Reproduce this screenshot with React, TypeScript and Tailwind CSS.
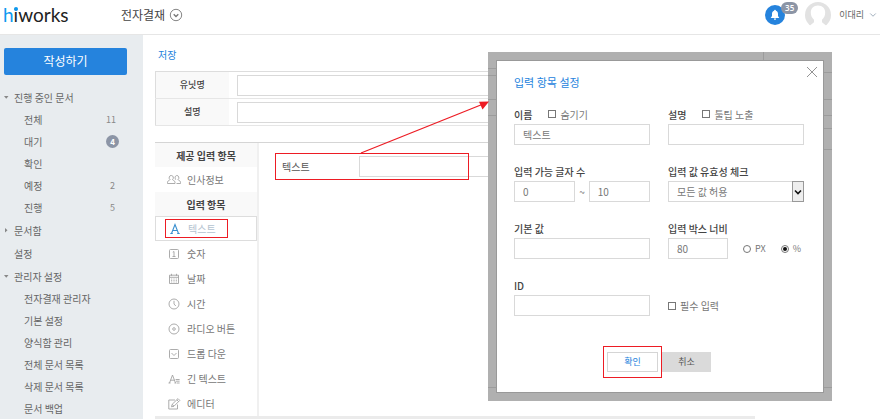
import type { ReactNode } from "react";
import { ChevronDown } from "lucide-react";

const menuGroups = [
  {
    title: "진행 중인 문서",
    arrow: "down",
    items: [
      { label: "전체", count: 11 },
      { label: "대기", count: 4, badge: true },
      { label: "확인" },
      { label: "예정", count: 2 },
      { label: "진행", count: 5 },
    ],
  },
  { title: "문서함", arrow: "right", items: [] },
  { title: "설정", arrow: "", items: [] },
  {
    title: "관리자 설정",
    arrow: "down",
    items: [
      { label: "전자결재 관리자" },
      { label: "기본 설정" },
      { label: "양식함 관리" },
      { label: "전체 문서 목록" },
      { label: "삭제 문서 목록" },
      { label: "문서 백업" },
    ],
  },
];

const Icon = ({ children }: { children: ReactNode }) => (
  <svg
    viewBox="0 0 14 14"
    className="size-3.5 shrink-0"
    fill="none"
    stroke="#a3a3a3"
    strokeWidth="0.9"
    aria-hidden="true"
  >
    {children}
  </svg>
);

const fieldTypes = [
  {
    label: "숫자",
    icon: (
      <Icon>
        <rect x="2.5" y="2.5" width="9" height="9" rx="1" />
        <path d="M5.8 5.2 7 4.5V9.5M5.5 9.5h3" />
      </Icon>
    ),
  },
  {
    label: "날짜",
    icon: (
      <Icon>
        <path d="M2.5 3.2h9v8.3h-9zM2.5 5.3h9M4.5 1.8v2M9.5 1.8v2" />
        <path d="M4.2 7h1M6.5 7h1M8.8 7h1M4.2 8.5h1M6.5 8.5h1M8.8 8.5h1M4.2 10h1M6.5 10h1M8.8 10h1" />
      </Icon>
    ),
  },
  {
    label: "시간",
    icon: (
      <Icon>
        <circle cx="7" cy="7" r="5" />
        <path d="M7 3.8V7l1.8 2" />
      </Icon>
    ),
  },
  {
    label: "라디오 버튼",
    icon: (
      <Icon>
        <circle cx="7" cy="7" r="5" />
        <circle cx="7" cy="7" r="1.3" />
      </Icon>
    ),
  },
  {
    label: "드롭 다운",
    icon: (
      <Icon>
        <rect x="2.5" y="2.5" width="9" height="9" rx="1" />
        <path d="m4.5 6 2.5 2.5L9.5 6" />
      </Icon>
    ),
  },
  {
    label: "긴 텍스트",
    icon: (
      <Icon>
        <path d="M2.5 11 5.5 3 8.5 11M3.5 8.2h4M1.5 11h2M7.5 11h1.5M8.6 7.5h4M9 9.2h3.6M9.6 11h3" />
      </Icon>
    ),
  },
  {
    label: "에디터",
    icon: (
      <Icon>
        <path d="M8 3H1.8v9h8.7V7.5" />
        <path d="m4.5 9.8.6-2.4L11 1.6l1.8 1.8L7 9.2zM9.8 2.8l1.8 1.8M5.1 7.4 7 9.2" />
      </Icon>
    ),
  },
];

const inputStyle =
  "h-[21px] min-w-0 w-full border border-[#d9d9d9] bg-white px-2 text-[10px] text-[#777] outline-none";
const checkStyle = "size-2 appearance-none border border-[#777] bg-white";

const Header = () => (
  <header className="flex h-[35px] items-center border-b border-[#e6e6e6] bg-white pb-1">
    <a
      href="#"
      className="relative w-[118px] pl-[3px] font-[Lato] text-[19px] leading-6 text-[#222]"
    >
      <span className="text-[#0d99f0]">h</span>
      <span className="relative">
        i
        <span className="absolute top-[4px] left-0 size-[4px] rounded-full bg-[#0d99f0]" />
      </span>
      works
    </a>
    <button className="flex items-center gap-1 pl-[3px] text-xs text-[#444]">
      전자결재
      <svg
        viewBox="0 0 14 14"
        className="size-3.5"
        fill="none"
        stroke="#777"
        aria-hidden="true"
      >
        <circle cx="7" cy="7" r="5.7" strokeWidth="0.9" />
        <path d="M4.7 6.2 7 8.5l2.3-2.3" strokeWidth="1.3" />
      </svg>
    </button>
    <div className="ml-auto flex items-center pr-0.5">
      <button
        aria-label="알림"
        className="relative flex size-5 items-center justify-center rounded-full bg-[#2583dd]"
      >
        <svg viewBox="0 0 12 12" className="size-3" fill="#fff" aria-hidden="true">
          <path d="M6 .8c.6 0 .9.4.9.9C8.5 2.2 9 3.500 9 5v2l1.300 1.900H1.700L3 7V5c0-1.500.5-2.800 2.100-3.300 0-.5.3-.9.9-.9zM4.900 9.600h2.200c0 .8-.5 1.300-1.100 1.300s-1.100-.5-1.100-1.300z" />
        </svg>
        <span className="absolute -top-[3px] left-4 flex h-3 w-[17px] items-center justify-center rounded-full bg-[#8c95a6] font-['Open_Sans'] text-[8px] font-semibold text-white">
          35
        </span>
      </button>
      <svg viewBox="0 0 26 26" className="ml-5 size-[26px]" aria-hidden="true">
        <circle cx="13" cy="13" r="13" fill="#e2e2e2" />
        <path
          d="M13 3.500c4.500 0 7.200 3 7.200 7 0 3.200-1.300 5.600-3.200 7.200v2.500l4 3.300V26H5v-2.500l4-3.300v-2.500c-1.900-1.600-3.200-4-3.200-7.200 0-4 2.700-7 7.200-7z"
          fill="#fff"
        />
      </svg>
      <button className="ml-2 flex items-center gap-1 text-[9px] text-[#666]">
        이대리
        <ChevronDown className="size-2.5 text-[#8fa0b0]" />
      </button>
    </div>
  </header>
);

const Sidebar = () => (
  <aside className="w-[143px] shrink-0 bg-[#e8ecef] pt-3 text-[#666]">
    <div className="pr-4 pl-1">
      <button className="h-[27px] w-full rounded-xs bg-[#2583dd] text-xs text-white">
        작성하기
      </button>
    </div>
    <nav className="mt-3 flex flex-col gap-px text-[10px]">
      {menuGroups.map((group) => (
        <div key={group.title}>
          <a href="#" className="flex h-[22px] items-center">
            <span className="flex w-3.5 pl-1">
              {group.arrow && (
                <svg viewBox="0 0 5 5" className="size-[5px]" fill="#888" aria-hidden="true">
                  <path
                    d={group.arrow === "down" ? "M0 1h4.500L2.250 3.800z" : "M1 0v4.500L3.500 2.250z"}
                  />
                </svg>
              )}
            </span>
            {group.title}
          </a>
          {group.items.map((item) => (
            <a
              href="#"
              key={item.label}
              className="flex h-[22px] items-center justify-between pr-6 pl-6"
            >
              {item.label}
              {"count" in item && (
                <span
                  className={
                    "badge" in item
                      ? "flex size-[13px] items-center justify-center rounded-full bg-[#8c95a6] text-[8px] font-bold text-white"
                      : "w-[13px] pr-1 text-right text-[9px] text-[#888]"
                  }
                >
                  {item.count}
                </span>
              )}
            </a>
          ))}
        </div>
      ))}
    </nav>
  </aside>
);

const Palette = () => (
  <div className="w-[104px] shrink-0 border-r-2 border-[#f0f0f0] text-[10px] text-[#777]">
    <h3 className="flex h-6 items-center justify-center bg-[#f9f9f9] font-bold text-[#444]">
      제공 입력 항목
    </h3>
    <button className="flex h-[25px] w-full items-center gap-1.5 pl-3">
      <Icon>
        <path d="M4.300 2.500a2 2.200 0 0 1 1.200 4c0 1 2.500.8 2.500 2.800v1.200H.5V9.300c0-2 2.500-1.800 2.500-2.800a2 2.200 0 0 1 1.300-4z" />
        <path d="M9.700 2.500a2 2.200 0 0 1 1.300 4c0 1 2.500.8 2.500 2.800v1.200H9.500M8.200 6.800c.5-.3.400-.600.2-.9a2 2.200 0 0 1 1.300-3.400" />
      </Icon>
      인사정보
    </button>
    <h3 className="flex h-6 items-center justify-center bg-[#f9f9f9] font-bold text-[#444]">
      입력 항목
    </h3>
    <button className="relative flex h-[25px] w-full items-center gap-1.5 border border-[#ddd] pl-3 text-[#b4c3d0]">
      <svg
        viewBox="0 0 14 14"
        className="size-3.5"
        fill="none"
        stroke="#3a8fcf"
        strokeWidth="1.100"
        aria-hidden="true"
      >
        <path d="M3.500 11.500 7 2.500l3.500 9M4.700 8.500h4.600M2.300 11.500h2.500M9.200 11.500h2.500" />
      </svg>
      텍스트
      <span className="absolute inset-y-0.5 left-[9px] w-[63px] border border-[#ed1c24]" />
    </button>
    {fieldTypes.map((type) => (
      <button
        key={type.label}
        className="flex h-[25px] w-full items-center gap-1.5 pl-3"
      >
        {type.icon}
        {type.label}
      </button>
    ))}
  </div>
);

const Field = ({
  id,
  label,
  check,
  children,
}: {
  id: string;
  label: string;
  check?: string;
  children: ReactNode;
}) => (
  <div>
    <div className="flex h-5 items-center gap-4">
      <label htmlFor={id} className="font-medium text-[#444]">
        {label}
      </label>
      {check && (
        <label className="flex items-center gap-1">
          <input type="checkbox" className={checkStyle} />
          {check}
        </label>
      )}
    </div>
    {children}
  </div>
);

const SettingsDialog = () => (
  <div className="absolute top-[52px] left-[488px] w-[344px] bg-[#b0b0b0] p-2">
    {/* table rules dimmed behind the dialog */}
    <svg
      viewBox="0 0 344 349"
      className="absolute inset-0 size-full"
      stroke="#9c9c9c"
      aria-hidden="true"
    >
      <path d="M0 16.500h8M0 23.500h8M0 47.500h8M0 63.500h8M275.500 0v8M336 20.500h8M336 47.500h8M336 63.500h8M336 76.500h8M336 97.500h8M0 335.500h8M336 335.500h8" />
    </svg>
    <div
      role="dialog"
      aria-labelledby="dialog-title"
      className="relative border border-[#999] bg-white pt-[11px] pr-[19px] pb-5 pl-[17px] text-[10px] text-[#777]"
    >
      <button aria-label="닫기" className="absolute top-1 right-1">
        <svg
          viewBox="0 0 14 14"
          className="size-3.5"
          stroke="#888"
          strokeWidth="0.9"
          aria-hidden="true"
        >
          <path d="m2 2 10 10M12 2 2 12" />
        </svg>
      </button>
      <h2 id="dialog-title" className="h-5 text-[11px] leading-5 text-[#2583dd]">
        입력 항목 설정
      </h2>
      <div className="mt-3 grid grid-cols-2 gap-x-[18px] gap-y-4">
        <Field id="name" label="이름" check="숨기기">
          <input id="name" defaultValue="텍스트" className={inputStyle} />
        </Field>
        <Field id="desc" label="설명" check="툴팁 노출">
          <input id="desc" className={inputStyle} />
        </Field>
        <Field id="min" label="입력 가능 글자 수">
          <div className="flex items-center gap-1">
            <input id="min" defaultValue="0" className={inputStyle} />
            ~
            <input aria-label="최대 글자 수" defaultValue="10" className={inputStyle} />
          </div>
        </Field>
        <Field id="valid" label="입력 값 유효성 체크">
          <div className="relative flex">
            <select id="valid" className={`${inputStyle} appearance-none`}>
              <option>모든 값 허용</option>
            </select>
            <span className="pointer-events-none absolute inset-y-0 right-0 flex w-3 items-center justify-center border border-[#999] bg-[#eee]">
              <svg
                viewBox="0 0 8 8"
                className="size-2"
                fill="none"
                stroke="#111"
                strokeWidth="1.600"
                aria-hidden="true"
              >
                <path d="m1 2.500 3 3 3-3" />
              </svg>
            </span>
          </div>
        </Field>
        <Field id="default" label="기본 값">
          <input id="default" className={inputStyle} />
        </Field>
        <Field id="width" label="입력 박스 너비">
          <div className="flex items-center">
            <div className="flex w-[60px]">
              <input id="width" defaultValue="80" className={inputStyle} />
            </div>
            <label className="ml-[15px] flex items-center gap-1 text-[9px]">
              <input
                type="radio"
                name="unit"
                className="size-2 appearance-none rounded-full border border-[#777]"
              />
              PX
            </label>
            <label className="ml-[15px] flex items-center gap-1 text-[9px]">
              <input
                type="radio"
                name="unit"
                defaultChecked
                className="size-2 appearance-none rounded-full border border-[#777] checked:bg-[#111] checked:bg-clip-content checked:p-px"
              />
              %
            </label>
          </div>
        </Field>
        <Field id="field-id" label="ID">
          <input id="field-id" className={inputStyle} />
        </Field>
        <label className="flex h-[21px] items-center gap-1 self-end">
          <input type="checkbox" className={checkStyle} />
          필수 입력
        </label>
      </div>
      <div className="mt-9 flex justify-center gap-1 text-[9px]">
        <div className="relative">
          <button className="h-5 w-[51px] border border-[#d5d5d5] text-[#2583dd]">
            확인
          </button>
          <span className="pointer-events-none absolute -inset-x-1 -inset-y-1.5 z-10 border border-[#ed1c24]" />
        </div>
        <button className="h-5 w-[49px] bg-[#dadada] text-[#555]">취소</button>
      </div>
    </div>
  </div>
);

export default function App() {
  return (
    <div className="relative flex min-h-screen flex-col bg-white font-['Noto_Sans_CJK_KR',sans-serif]">
      <Header />
      <div className="flex flex-1">
        <Sidebar />
        <main className="flex-1 pr-[125px] pl-3">
          <button className="mt-2.5 h-5 pl-[3px] text-[10px] leading-5 text-[#2583dd]">
            저장
          </button>
          <table className="mt-1.5 w-full border border-[#ddd] text-[9px] text-[#444]">
            <tbody>
              {["유닛명", "설명"].map((label) => (
                <tr key={label} className="h-[27px] border-b border-[#e6e6e6]">
                  <th className="w-[73px] bg-[#f9f9f9] font-medium">
                    <label htmlFor={label}>{label}</label>
                  </th>
                  <td className="pr-2 pl-2">
                    <input id={label} className={`${inputStyle} block`} />
                  </td>
                </tr>
              ))}
            </tbody>
          </table>
          <div className="mt-4 flex border-t border-b-3 border-t-[#d5d5d5] border-b-[#ebebeb]">
            <Palette />
            <div className="flex-1 pt-2.5 pl-4">
              <div className="relative flex h-[27px] items-center pl-[7px]">
                <label
                  htmlFor="preview"
                  className="w-[77px] shrink-0 text-[10px] text-[#555]"
                >
                  텍스트
                </label>
                <input id="preview" className={inputStyle} />
                <span className="pointer-events-none absolute inset-y-0 left-0 w-[194px] border border-[#ed1c24]" />
              </div>
            </div>
          </div>
        </main>
      </div>
      <SettingsDialog />
      <svg
        viewBox="0 0 130 54"
        className="pointer-events-none absolute top-[100px] left-[360px] h-[54px] w-[130px]"
        aria-hidden="true"
      >
        <path d="M1 53 122 4.500" stroke="#ed1c24" strokeWidth="1.300" />
        <path d="m129 1.500-10 .3 3.500 7.700z" fill="#ed1c24" />
      </svg>
    </div>
  );
}
